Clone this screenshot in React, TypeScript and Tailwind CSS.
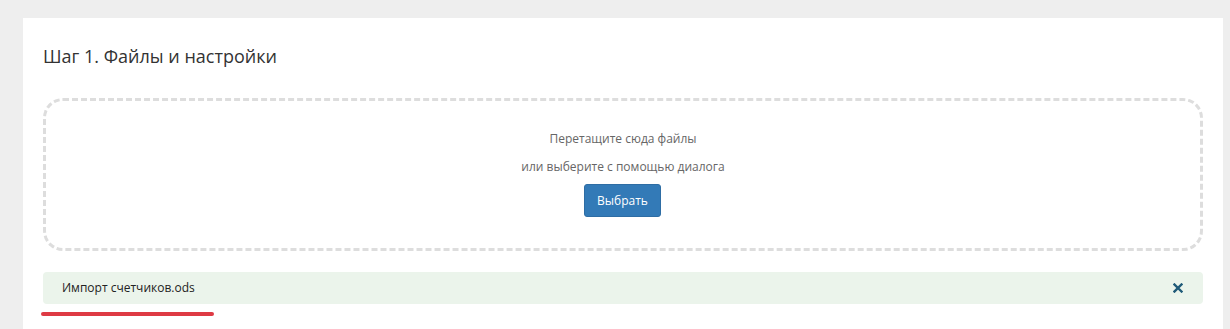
export default function App() {
  return (
    <div className="min-h-[329px] bg-[#eeeeee] pl-[23px] pr-[7px] pt-[18px] font-['Open_Sans',sans-serif]">
      <main className="min-h-[311px] bg-white px-5 pt-[25px]">
        <h1 className="text-[18px] leading-[26px] text-[#333333]">Шаг 1. Файлы и настройки</h1>

        <section className="mt-[29px] flex flex-col items-center rounded-[20px] border-[3px] border-dashed border-[#dddddd] pb-[31px] pt-[28px] text-[12px] leading-5 text-[#666666]">
          <p>Перетащите сюда файлы</p>
          <p className="mt-2">или выберите с помощью диалога</p>
          <button className="mr-[1px] mt-[7px] h-[33px] w-[77px] rounded-[3px] border border-[#2e6da4] bg-[#337ab7] text-[12px] text-white">
            Выбрать
          </button>
        </section>

        <div className="mt-[21px] flex h-[32px] items-center justify-between rounded-[4px] bg-[#ebf4eb] pl-[19px] pr-[20px] text-[12px] text-[#222222]">
          <span>Импорт счетчиков.ods</span>
          <svg width="10" height="10" viewBox="0 0 10 10" aria-hidden="true">
            <path d="M1.5 1.5 L8.5 8.5 M8.5 1.5 L1.5 8.5" stroke="#1f5a78" strokeWidth="2.4" strokeLinecap="square" />
          </svg>
        </div>

        <div className="ml-[-2px] mt-[8px] h-[4px] w-[173px] rounded-full bg-[#de3a44]" />
      </main>
    </div>
  )
}
